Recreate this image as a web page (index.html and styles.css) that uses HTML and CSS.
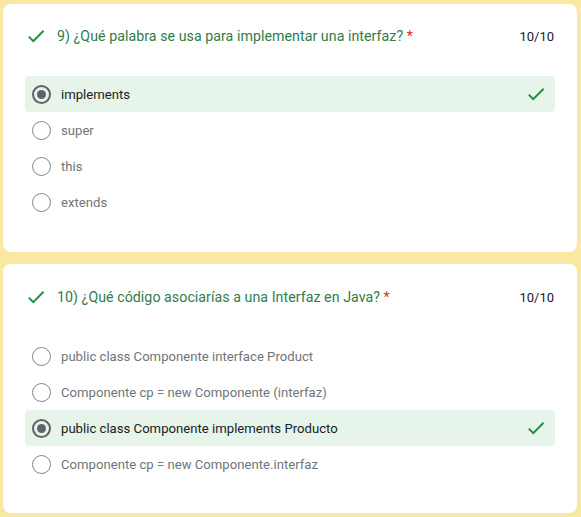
FILE: index.html
```html
<!DOCTYPE html>
<html lang="es">
<head>
<meta charset="utf-8">
<title>Quiz</title>
<link rel="stylesheet" href="styles.css">
</head>
<body>
<div class="page">
  <section class="card">
    <div class="title-row">
      <svg class="check" viewBox="0 0 24 24" width="22" height="22"><path d="M9 16.17L4.83 12l-1.42 1.41L9 19 21 7l-1.41-1.41z"/></svg>
      <div class="title">9) ¿Qué palabra se usa para implementar una interfaz? <span class="req">*</span></div>
      <div class="score">10/10</div>
    </div>
    <div class="options">
      <div class="opt correct"><span class="radio on"></span><span class="label">implements</span><svg class="check" viewBox="0 0 24 24" width="22" height="22"><path d="M9 16.17L4.83 12l-1.42 1.41L9 19 21 7l-1.41-1.41z"/></svg></div>
      <div class="opt"><span class="radio"></span><span class="label">super</span></div>
      <div class="opt"><span class="radio"></span><span class="label">this</span></div>
      <div class="opt"><span class="radio"></span><span class="label">extends</span></div>
    </div>
  </section>
  <section class="card card-second">
    <div class="title-row">
      <svg class="check" viewBox="0 0 24 24" width="22" height="22"><path d="M9 16.17L4.83 12l-1.42 1.41L9 19 21 7l-1.41-1.41z"/></svg>
      <div class="title">10) ¿Qué código asociarías a una Interfaz en Java? <span class="req">*</span></div>
      <div class="score">10/10</div>
    </div>
    <div class="options">
      <div class="opt"><span class="radio"></span><span class="label">public class Componente interface Product</span></div>
      <div class="opt"><span class="radio"></span><span class="label">Componente cp = new Componente (interfaz)</span></div>
      <div class="opt correct"><span class="radio on"></span><span class="label">public class Componente implements Producto</span><svg class="check" viewBox="0 0 24 24" width="22" height="22"><path d="M9 16.17L4.83 12l-1.42 1.41L9 19 21 7l-1.41-1.41z"/></svg></div>
      <div class="opt"><span class="radio"></span><span class="label">Componente cp = new Componente.interfaz</span></div>
    </div>
  </section>
</div>
</body>
</html>
```
FILE: styles.css
```css
* { box-sizing: border-box; }
html, body { margin: 0; padding: 0; }
body {
  background: #f8e8a2;
  font-family: Roboto, "Liberation Sans", Arial, sans-serif;
  width: 581px;
  height: 517px;
  overflow: hidden;
}
.page {
  display: flex;
  flex-direction: column;
  gap: 12px;
  padding: 4px 4px 0 3px;
}
.card {
  background: #fff;
  border-radius: 8px;
  height: 248px;
  padding: 20px 22px 32px 22px;
}
.card-second {
  height: 249px;
  padding-top: 21px;
}
.card-second .title-row {
  margin-bottom: 29px;
}
.title-row {
  display: flex;
  align-items: center;
  height: 24px;
  margin-bottom: 28px;
}
.check {
  fill: #1e8e3e;
  flex: none;
}
.title {
  flex: 1;
  margin-left: 10px;
  font-size: 14.2px;
  color: #2e7d4a;
  letter-spacing: 0.05px;
}
.req { color: #d93025; }
.score {
  font-size: 13px;
  color: #202124;
  margin-right: 1px;
}
.options {
  display: flex;
  flex-direction: column;
}
.opt {
  display: flex;
  align-items: center;
  height: 36px;
  padding: 0 0 0 7px;
  border-radius: 4px;
}
.opt.correct {
  background: #e6f4ea;
  padding-right: 8px;
}
.radio {
  flex: none;
  width: 19px;
  height: 19px;
  border-radius: 50%;
  border: 1.5px solid #80868b;
  display: flex;
  align-items: center;
  justify-content: center;
}
.radio.on {
  border: 2px solid #5f6368;
}
.radio.on::after {
  content: "";
  width: 9px;
  height: 9px;
  border-radius: 50%;
  background: #5f6368;
}
.label {
  flex: 1;
  margin-left: 10px;
  font-size: 13.15px;
  color: #70757a;
}
.opt.correct .label { color: #202124; }
```
